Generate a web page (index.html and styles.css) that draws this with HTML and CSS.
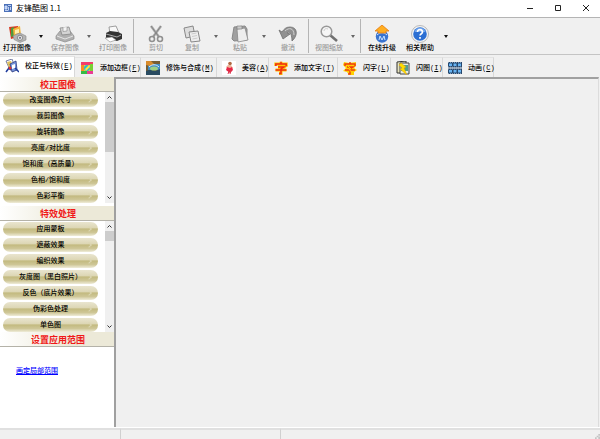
FILE: index.html
```html
<!DOCTYPE html>
<html lang="zh-CN">
<head>
<meta charset="utf-8">
<title>友锋酷图 1.1</title>
<link rel="stylesheet" href="styles.css">
</head>
<body>
<header class="titlebar">
  <svg class="app-icon" viewBox="0 0 8 8"><rect width="8" height="8" fill="#4a70b8"/><path d="M1 2h2v3H1zM4 1.500h3M4.500 3v3.500M6.500 3v3M1 6.500h3" stroke="#dce8ff" stroke-width=".8" fill="#a9c2f0"/></svg>
  <span class="title">友锋酷图 1.1</span>
  <button class="win" aria-label="最小化"><svg viewBox="0 0 8 8"><path d="M1 4.500h6"/></svg></button>
  <button class="win" aria-label="最大化"><svg viewBox="0 0 8 8"><path d="M1.500 1.500h5v5h-5z"/></svg></button>
  <button class="win" aria-label="关闭"><svg viewBox="0 0 8 8"><path d="M1 1l6 6M7 1L1 7"/></svg></button>
</header>

<nav class="toolbar">
  <button class="tool"><svg viewBox="0 0 20 18"><path d="M2 2l9-1 2 10-9 3z" fill="#d83a20"/><path d="M4 3l3-1v9l-3 1z" fill="#4f9a3d"/><path d="M6 4l7-3 1 9-7 3z" fill="#f4b53c"/><path d="M8 5l4-1v4l-4 1z" fill="#fff0b0"/><path d="M6 11l4-2 3-1 6 3v4l-6 2.500-6-3z" fill="#b4b4b4" stroke="#888" stroke-width=".6"/><circle cx="13" cy="12.800" r="2.600" fill="#e8e8e8" stroke="#777" stroke-width=".8"/><circle cx="13" cy="12.800" r="1.100" fill="#778"/></svg>打开图像</button>
  <button class="drop" aria-label="打开菜单"></button>
  <button class="tool" disabled><svg viewBox="0 0 20 18"><path d="M1 11l4-5h10l4 5v3l-9 3-9-3z" fill="#b0b0b0" stroke="#8c8c8c" stroke-width=".7"/><path d="M2 11l8 3 8-3" fill="none" stroke="#e5e5e5"/><path d="M5 3l9-1 2 7-9 1z" fill="#d4d4d4" stroke="#888" stroke-width=".8"/><path d="M8 2.500v4l4-.5v-4" fill="#f4f4f4" stroke="#888" stroke-width=".6"/></svg>保存图像</button>
  <button class="drop" disabled aria-label="保存菜单"></button>
  <button class="tool" disabled><svg viewBox="0 0 20 18"><path d="M6 2l7-1 3 7-9 1z" fill="#f8f8f8" stroke="#888" stroke-width=".8"/><path d="M3 8l4-2 8 1 4 2v5l-5 2-11-3z" fill="#333"/><path d="M3 9l11 3 4-2" fill="none" stroke="#aaa"/><path d="M2 13l7-1 4 3-6 2z" fill="#fff" stroke="#888" stroke-width=".6"/></svg>打印图像</button>
  <span class="sep"></span>
  <button class="tool tool-wide" disabled><svg viewBox="0 0 20 18"><path d="M5 1l8 11M15 1L7 12" stroke="#aaa" stroke-width="2.400"/><path d="M5 1l8 11M15 1L7 12" stroke="#777" stroke-width=".7"/><circle cx="6" cy="14" r="2.500" fill="none" stroke="#909090" stroke-width="1.600"/><circle cx="14" cy="14" r="2.500" fill="none" stroke="#909090" stroke-width="1.600"/></svg>剪切</button>
  <button class="tool" disabled><svg viewBox="0 0 20 18"><path d="M2 3l9-2 2 10-9 2z" fill="#ddd" stroke="#888"/><path d="M7 7l9-1 2 10-9 1z" fill="#eee" stroke="#888"/><path d="M9.500 9l5-1M10 11.500l5-1M10.500 14l5-1" stroke="#bbb" stroke-width=".7"/></svg>复制</button>
  <button class="drop" disabled aria-label="复制菜单"></button>
  <button class="tool" disabled><svg viewBox="0 0 20 18"><path d="M4 2l11-1 2 3v11l-13 1-2-2z" fill="#a0a0a0" stroke="#888"/><path d="M7 4l8-1 3 12-10 2z" fill="#ededed" stroke="#888" stroke-width=".8"/><path d="M7 1h5v3H7z" fill="#ccc" stroke="#777" stroke-width=".6"/></svg>粘贴</button>
  <button class="drop" disabled aria-label="粘贴菜单"></button>
  <button class="tool" disabled><svg viewBox="0 0 20 18"><path d="M1 5l4 9 7-5-3-1c2-2 5 0 5 8 6-5 6-14-2-14-4 0-6 2-8 5z" fill="#909090" stroke="#6f6f6f" stroke-width=".8"/><path d="M7 6c4-4 9-3 9 4" fill="none" stroke="#d0d0d0"/></svg>撤消</button>
  <span class="sep"></span>
  <button class="tool" disabled><svg viewBox="0 0 20 18"><path d="M11 10l7 6" stroke="#707070" stroke-width="2.600"/><circle cx="7.500" cy="6.500" r="5.300" fill="#f6f6f6" stroke="#999" stroke-width="1.500"/><path d="M5 6c0-2 2-3 4-2" stroke="#ccc" fill="none"/></svg>视图缩放</button>
  <button class="drop" disabled aria-label="缩放菜单"></button>
  <span class="sep sep-tight"></span>
  <button class="tool tool-wide"><svg viewBox="0 0 20 18"><circle cx="10" cy="11.500" r="6.200" fill="#3974d0"/><path d="M5 10c3-3 7-3 10 0M7 15l1-4 2 4 2-4 1 4" stroke="#cbe4ff" fill="none"/><path d="M10 0l7 6h-3v2H6V6H3z" fill="#ffae20" stroke="#e47a0c" stroke-width=".8"/></svg>在线升级</button>
  <button class="tool tool-wide"><svg viewBox="0 0 20 18"><circle cx="10" cy="9" r="8.500" fill="#f4f4f4" stroke="#aaa" stroke-width=".8"/><circle cx="10" cy="9" r="6.800" fill="#2c6fd3"/><path d="M4.500 7a5.700 5.700 0 0111 0z" fill="#6fa4ec"/><path d="M7.500 7c0-3.500 5-3 5 0 0 1.700-2.400 1.700-2.400 3.500M10 12v1.800" stroke="#fff" stroke-width="1.700" fill="none"/></svg>相关帮助</button>
  <button class="drop" aria-label="帮助菜单"></button>
</nav>

<nav class="tabs">
  <button class="tab active"><svg viewBox="0 0 14 14"><path d="M1 2l6-2 3 8-5 3z" fill="#fff" stroke="#56608e" stroke-width=".8"/><path d="M2 3l4-1 2 5-4 2z" fill="#e0c05a"/><path d="M5 5l6-3 1 9-5 2z" fill="#7896db" stroke="#29397f" stroke-width=".8"/><path d="M7 6l3-1v4l-3 1z" fill="#fff"/><path d="M1 13l3-4 2 2M10 9l4 4" stroke="#1c3a9c" stroke-width="1.500" fill="none"/><circle cx="5" cy="9" r="1.500" fill="#d33"/></svg><span>校正与特效(<u>E</u>)</span></button>
  <button class="tab"><svg viewBox="0 0 14 14"><path d="M1 1h12v12H1z" fill="#f4d62c"/><path d="M1 1h12v3H1z" fill="#f33b6c"/><path d="M1 4h3v6H1z" fill="#fa8d24"/><path d="M1 10h6v3H1z" fill="#35bb45"/><path d="M7 10h6v3H7z" fill="#eb3c93"/><path d="M10 3h3v7h-3z" fill="#78cf35"/><circle cx="7" cy="7" r="3" fill="#27b7d8"/><path d="M5 8l4-4 1 2-4 4z" fill="#ffe63b"/></svg><span>添加边框(<u>F</u>)</span></button>
  <button class="tab"><svg viewBox="0 0 14 14"><path d="M0 0h14v14H0z" fill="#775d32"/><path d="M2 3h12v6H2z" fill="#3f8bc5"/><path d="M0 0h5l3 3-4 2-4-1z" fill="#d88b2c"/><path d="M0 10c5-3 8 2 14-2v6H0z" fill="#294b61"/><ellipse cx="8" cy="7.500" rx="4" ry="2" fill="#9dcf84"/><path d="M3 6c3-3 7-3 10 0" stroke="#d6f0ff" fill="none"/></svg><span>修饰与合成(<u>M</u>)</span></button>
  <button class="tab"><svg viewBox="0 0 14 14"><path d="M0 0h14v14H0z" fill="#fff"/><circle cx="8" cy="2.500" r="1.800" fill="#b06842"/><path d="M6 4l3 0 2 3-2 2-3-1-2-2z" fill="#efb49a"/><path d="M5 6l3 1 2-1 1 3-3 3-4-3z" fill="#e72545"/><path d="M7 10l-1 3M9 9l-1 4" stroke="#d93b50"/></svg><span>美容(<u>A</u>)</span></button>
  <button class="tab"><svg viewBox="0 0 14 14"><path d="M7 .8v2M1.800 5V3h10.400v2M4 6h6L7 8v4.500H5M1.500 9h11" stroke="#ffc400" stroke-width="3" fill="none"/><path d="M7 .8v2M1.800 5V3h10.400v2M4 6h6L7 8v4.500H5M1.500 9h11" stroke="#ef2d12" stroke-width="1.500" fill="none"/></svg><span>添加文字(<u>T</u>)</span></button>
  <button class="tab"><svg viewBox="0 0 14 14"><path d="M1 1l5 1 7-1v4l-2 2 3 2-3 2v3l-5 0-2-3-4-1 3-3-3-3z" fill="#ffd000"/><path d="M7 1v2M2 5V3h10v2M4 6h6L7 8v5H5M2 9h10" stroke="#ef3b12" stroke-width="1.500" fill="none"/><path d="M4 4l4 4-2 0 4 5" stroke="#ffd000" fill="none"/></svg><span>闪字(<u>L</u>)</span></button>
  <button class="tab"><svg viewBox="0 0 14 14"><path d="M1 1l9-1v12H1z" fill="#e6e3bd" stroke="#333"/><path d="M4 2h9v11H4z" fill="#e6ece5" stroke="#444"/><path d="M5 4h7v6H5z" fill="#559f8d"/><path d="M5 2l5 4-2 1 3 7-7-6 2-1-3-3z" fill="#ffdc00" stroke="#e69c00" stroke-width=".4"/></svg><span>闪图(<u>I</u>)</span></button>
  <button class="tab"><svg viewBox="0 0 14 14"><path d="M0 1h14v5.500H0zM0 7.500h14V13H0z" fill="#26476d"/><path d="M1 2.500h3v2.500H1zM5.500 2.500h3v2.500h-3zM10 2.500h3v2.500h-3zM1 9h3v2.500H1zM5.500 9h3v2.500h-3zM10 9h3v2.500h-3z" fill="#67b3f2"/><path d="M0 1.500h14M0 6h14M0 8h14M0 12.500h14" stroke="#dcecff" stroke-width=".5" stroke-dasharray="1 1"/></svg><span>动画(<u>C</u>)</span></button>
</nav>

<main class="work">
  <aside class="side">
    <h2>校正图像</h2>
    <div class="group group-first">
      <div class="list">
        <button class="item">改变图像尺寸</button>
        <button class="item">裁剪图像</button>
        <button class="item">旋转图像</button>
        <button class="item">亮度/对比度</button>
        <button class="item">饱和度（高质量）</button>
        <button class="item">色相/饱和度</button>
        <button class="item">色彩平衡</button>
      </div>
      <div class="scroll">
        <svg viewBox="0 0 9 9"><path d="M2.500 6l2-2 2 2"/></svg>
        <span class="thumb thumb-long"></span>
        <svg class="down" viewBox="0 0 9 9"><path d="M2.500 3l2 2 2-2"/></svg>
      </div>
    </div>
    <h2>特效处理</h2>
    <div class="group">
      <div class="list">
        <button class="item">应用蒙板</button>
        <button class="item">遮蔽效果</button>
        <button class="item">编织效果</button>
        <button class="item">灰度图（黑白照片）</button>
        <button class="item">反色（底片效果）</button>
        <button class="item">伪彩色处理</button>
        <button class="item">单色图</button>
      </div>
      <div class="scroll">
        <svg viewBox="0 0 9 9"><path d="M2.500 6l2-2 2 2"/></svg>
        <span class="thumb"></span>
        <svg class="down" viewBox="0 0 9 9"><path d="M2.500 3l2 2 2-2"/></svg>
      </div>
    </div>
    <h2>设置应用范围</h2>
    <a class="range" href="#">画定局部范围</a>
  </aside>
  <section class="canvas"></section>
</main>

<footer class="status">
  <span></span><span></span><span></span>
  <svg class="grip" viewBox="0 0 6 6"><path d="M4 0h2v2H4zM2 2h2v2H2zM4 3h2v3H4zM0 4h2v2H0z" fill="#c4c4c4"/></svg>
</footer>
</body>
</html>
```
FILE: styles.css
```css
* { box-sizing: border-box; }

body {
  margin: 0;
  height: 100vh;
  display: flex;
  flex-direction: column;
  background: #f0f0f0;
  color: #000;
  font: 500 7px/10px "Liberation Mono", "Noto Sans CJK SC", monospace;
  overflow: hidden;
}

button {
  margin: 0;
  padding: 0;
  border: 0;
  background: none;
  color: inherit;
  font: inherit;
  white-space: nowrap;
}

svg { display: block; flex: none; }

/* Title bar */
.titlebar {
  flex: none;
  display: flex;
  align-items: center;
  height: 18px;
  padding: 0 0 2px 4px;
  background: #fff;
  border-bottom: 1px solid #b4b4b4;
}
.app-icon { width: 8px; height: 8px; }
.title {
  flex: 1;
  padding-left: 4px;
  font-family: "Noto Sans CJK SC", sans-serif;
  font-size: 8px;
  font-weight: 400;
}
.win { width: 28px; height: 14px; display: grid; place-items: center; }
.win svg { width: 8px; height: 8px; fill: none; stroke: #222; stroke-width: 1; }

/* Toolbar */
.toolbar {
  flex: none;
  display: flex;
  align-items: center;
  height: 37px;
  border-bottom: 1px solid #c4c4c4;
}
.tool {
  width: 34px;
  display: flex;
  flex-direction: column;
  align-items: center;
}
.tool-wide { width: 38px; }
.tool svg { width: 20px; height: 18px; margin-top: 5px; }
.tool:disabled { color: #9c9c9c; }
.drop { width: 14px; height: 34px; display: grid; place-items: center; }
.drop::before {
  content: "";
  border: 2px solid transparent;
  border-top: 3px solid #111;
  border-bottom: 0;
}
.drop:disabled::before { border-top-color: #666; }
.sep { width: 1px; height: 34px; margin: 0 3px; background: #b4b4b4; }
.sep-tight { margin: 0 2px 0 0; }

/* Tabs */
.tabs {
  flex: none;
  display: grid;
  grid-template-columns: 75px 66px 76px 52px 69px 53px 52px 51px;
  height: 22px;
  padding-top: 1px;
}
.tab {
  display: flex;
  align-items: center;
  gap: 6px;
  margin-top: 1px;
  padding-left: 5px;
  border-right: 1px solid #d8d8d8;
  border-top: 1px solid #e4e4e4;
}
.tab svg { width: 14px; height: 14px; }
.tab.active { margin-top: 0; padding-bottom: 2px; background: #fff; }

/* Work area */
.work { flex: 1; min-height: 0; display: flex; padding-right: 1px; }
.side {
  flex: none;
  width: 116px;
  background: #fff;
  border-right: 2px solid #a0a0a0;
}
.canvas {
  flex: 1;
  border-top: 2px solid #a0a0a0;
  border-right: 1px solid #dcdcdc;
}
h2 {
  margin: 0;
  padding-left: 2px;
  height: 15px;
  border-bottom: 1px solid #b4b2a8;
  background: linear-gradient(90deg, #fff, #ece9d8 60%);
  color: #f01818;
  font: 700 9px/15px "Noto Sans CJK SC", sans-serif;
  text-align: center;
}
.group { display: flex; }
.group-first { padding-bottom: 3px; }
.list {
  flex: 1;
  display: flex;
  flex-direction: column;
  gap: 2px;
  padding: 1px 7px 0 3px;
}
.item {
  position: relative;
  height: 14px;
  border-radius: 7px;
  background: linear-gradient(#e9e5cf, #ddd7b5 40%, #c3ba80 50%, #cec696 75%, #efecd9);
}
.item::after {
  content: "";
  position: absolute;
  right: 7px;
  top: 5px;
  width: 3px;
  height: 3px;
  border: solid #dcd6b2;
  border-width: 1px 1px 0 0;
  transform: rotate(45deg);
}
.scroll {
  flex: none;
  width: 9px;
  display: flex;
  flex-direction: column;
  background: #f0f0f0;
}
.scroll svg { width: 9px; height: 10px; fill: none; stroke: #333; stroke-width: 1; }
.thumb { height: 10px; background: #cdcdcd; }
.thumb-long { height: 50px; }
.down { margin-top: auto; }
.range {
  display: inline-block;
  margin: 19px 0 0 16px;
  color: #00f;
}

/* Status bar */
.status {
  flex: none;
  position: relative;
  display: grid;
  grid-template-columns: 121px 160px 1fr;
  height: 12px;
  border-top: 1px solid #fff;
}
.status span { border-top: 2px solid #e0e0e0; border-right: 1px solid #d0d0d0; }
.status span:nth-child(3) { border-right: 0; }
.grip { position: absolute; right: 0; bottom: 0; width: 5px; height: 5px; }
```
